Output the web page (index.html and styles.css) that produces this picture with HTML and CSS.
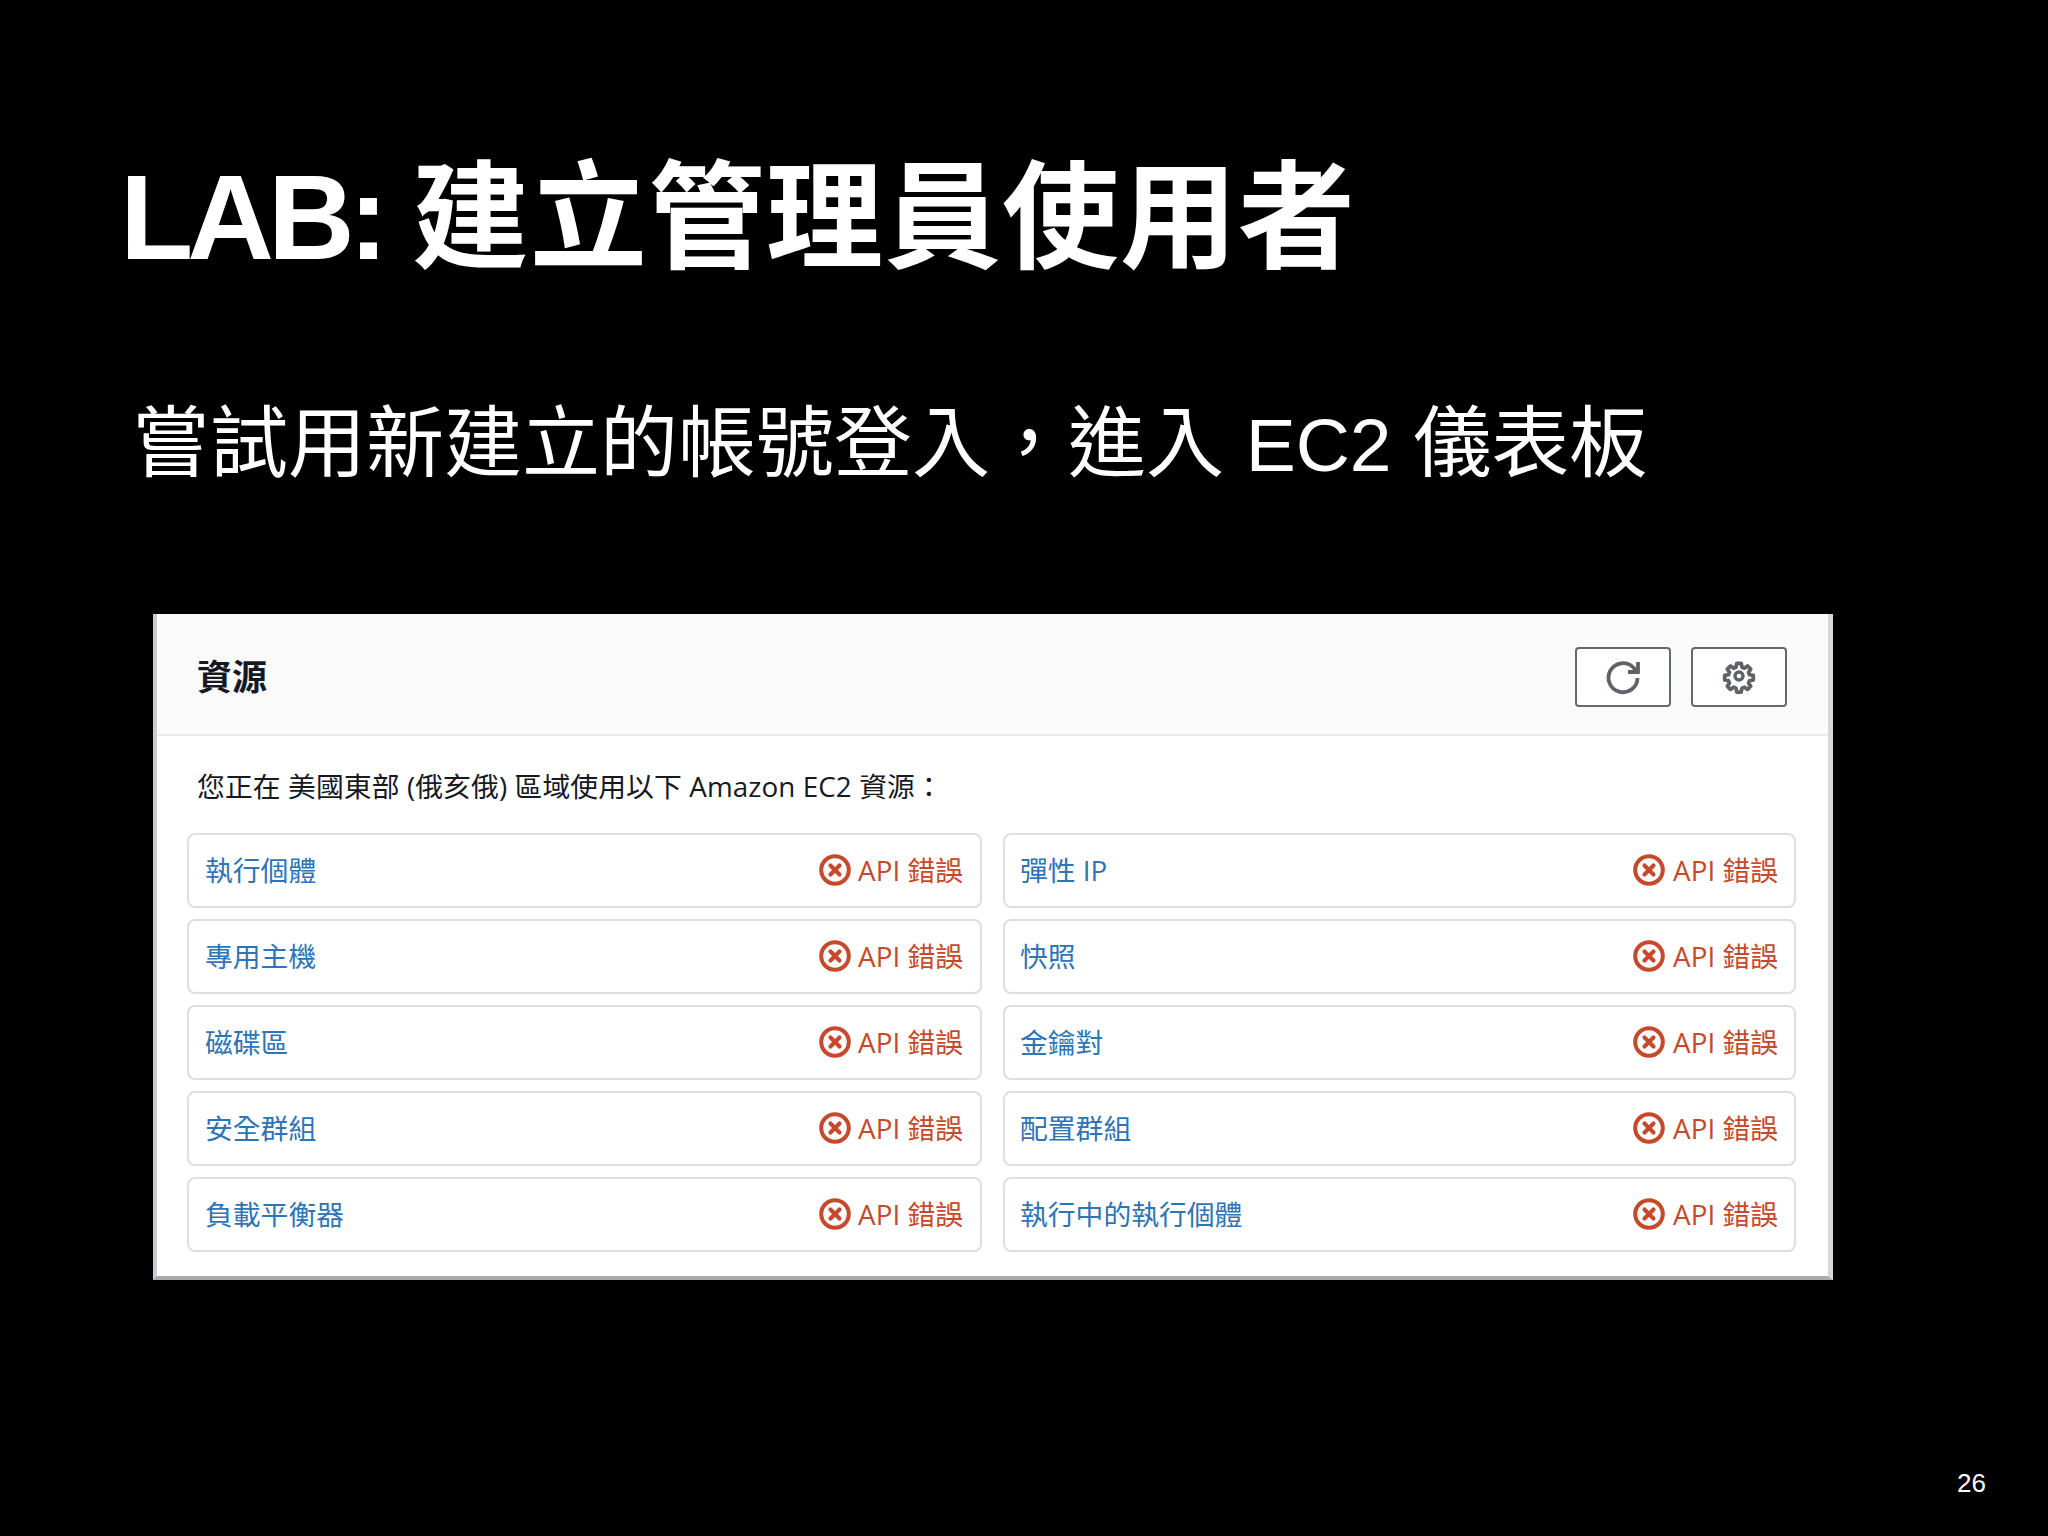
FILE: index.html
```html
<!DOCTYPE html>
<html lang="zh-Hant">
<head>
  <meta charset="UTF-8">
  <meta name="viewport" content="width=device-width, initial-scale=1.0">
  <title>LAB: 建立管理員使用者</title>
  <link rel="stylesheet" href="styles.css">
</head>
<body>
<svg class="defs" width="0" height="0">
  <symbol id="err" viewBox="0 0 32 32">
    <circle cx="16" cy="16" r="13.8" fill="none" stroke="currentColor" stroke-width="4"/>
    <path d="M11.500 11.500l9 9M20.500 11.500l-9 9" fill="none" stroke="currentColor" stroke-width="4.200" stroke-linecap="round"/>
  </symbol>
</svg>
<div class="slide">
  <h1 class="slide-title"><span class="lab">LAB:</span> 建立管理員使用者</h1>
  <p class="slide-sub">嘗試用新建立的帳號登入，進入 <span class="sub-latin">EC2</span> 儀表板</p>

  <div class="panel">
    <div class="panel-head">
      <h2>資源</h2>
      <div class="head-btns">
        <button class="icon-btn" type="button" aria-label="refresh">
          <svg width="36" height="36" viewBox="0 0 36 36"><path d="M32.500 19A14.500 14.500 0 1 1 28.300 8.500L33 13" fill="none" stroke="currentColor" stroke-width="3.800"/><path d="M33 3v10H23" fill="none" stroke="currentColor" stroke-width="3.800"/></svg>
        </button>
        <button class="icon-btn" type="button" aria-label="settings">
          <svg width="36" height="36" viewBox="0 1 36 36"><path d="M15.500 4h5l.8 4.200 2.700 1.100 3.500-2.400 3.500 3.500-2.400 3.500 1.100 2.700 4.200.8v5l-4.200.8-1.100 2.700 2.400 3.500-3.500 3.500-3.500-2.400-2.700 1.100-.8 4.200h-5l-.8-4.200-2.700-1.100-3.500 2.400-3.500-3.500 2.400-3.500-1.100-2.700-4.200-.8v-5l4.200-.8 1.100-2.700-2.400-3.500 3.500-3.500 3.500 2.400 2.700-1.100z" transform="translate(1.800 1.800) scale(.9)" fill="none" stroke="currentColor" stroke-width="4.200" stroke-linejoin="round"/><circle cx="18" cy="18" r="4" fill="none" stroke="currentColor" stroke-width="3.400"/></svg>
        </button>
      </div>
    </div>
    <div class="panel-body">
      <p class="intro">您正在 美國東部 (俄亥俄) 區域使用以下 Amazon EC2 資源：</p>
      <div class="res-grid">
        <div class="res-row"><a>執行個體</a><span class="api-err"><svg><use href="#err"/></svg>API 錯誤</span></div>
        <div class="res-row"><a>彈性 IP</a><span class="api-err"><svg><use href="#err"/></svg>API 錯誤</span></div>
        <div class="res-row"><a>專用主機</a><span class="api-err"><svg><use href="#err"/></svg>API 錯誤</span></div>
        <div class="res-row"><a>快照</a><span class="api-err"><svg><use href="#err"/></svg>API 錯誤</span></div>
        <div class="res-row"><a>磁碟區</a><span class="api-err"><svg><use href="#err"/></svg>API 錯誤</span></div>
        <div class="res-row"><a>金鑰對</a><span class="api-err"><svg><use href="#err"/></svg>API 錯誤</span></div>
        <div class="res-row"><a>安全群組</a><span class="api-err"><svg><use href="#err"/></svg>API 錯誤</span></div>
        <div class="res-row"><a>配置群組</a><span class="api-err"><svg><use href="#err"/></svg>API 錯誤</span></div>
        <div class="res-row"><a>負載平衡器</a><span class="api-err"><svg><use href="#err"/></svg>API 錯誤</span></div>
        <div class="res-row"><a>執行中的執行個體</a><span class="api-err"><svg><use href="#err"/></svg>API 錯誤</span></div>
      </div>
    </div>
  </div>

  <div class="page-num">26</div>
</div>
</body>
</html>
```

FILE: styles.css
```css
body {
  margin: 0;
  background: #000;
  font-family: "Liberation Sans", "Noto Sans CJK TC", sans-serif;
}

.defs {
  display: block;
  height: 0;
}

.slide {
  height: 1536px;
  box-sizing: border-box;
  padding: 147px 62px 0 120px;
  display: flex;
  flex-direction: column;
  color: #fff;
}

.slide-title {
  margin: 0;
  font-size: 117px;
  line-height: 140px;
  font-weight: 700;
  letter-spacing: 1px;
  white-space: nowrap;
}

.lab {
  font-size: 120px;
  letter-spacing: -6px;
  margin-right: -4px;
}

.slide-sub {
  margin: 0 0 0 12px;
  padding-top: 110px;
  font-size: 78px;
  line-height: 90px;
  white-space: nowrap;
}

.sub-latin {
  font-size: 75px;
}

.panel {
  margin: 124px 0 0 33px;
  width: 1680px;
  height: 666px;
  box-sizing: border-box;
  background: #fff;
  border-left: 4px solid #c9cbcc;
  border-right: 5px solid #d5d7d8;
  border-bottom: 4px solid #a9abac;
  color: #16191f;
  font-family: "Open Sans", "Noto Sans CJK TC", sans-serif;
}

.panel-head {
  height: 122px;
  box-sizing: border-box;
  background: #fafafa;
  border-bottom: 2px solid #eaeded;
  padding: 33px 41px 0 40px;
  display: flex;
  justify-content: space-between;
}

.panel-head h2 {
  margin: 1px 0 0;
  font-size: 35px;
  line-height: 58px;
  font-weight: 700;
}

.head-btns {
  display: flex;
  gap: 20px;
}

.icon-btn {
  width: 96px;
  height: 60px;
  padding: 0;
  background: #fff;
  border: 2px solid #65696e;
  border-radius: 4px;
  color: #5f6368;
  display: flex;
  align-items: center;
  justify-content: center;
}

.panel-body {
  padding: 30px 32px 0 30px;
}

.intro {
  margin: 0 0 0 10px;
  font-size: 27.800px;
  line-height: 40px;
  letter-spacing: .1px;
  white-space: nowrap;
}

.res-grid {
  margin-top: 27px;
  display: grid;
  grid-template-columns: 795px 793px;
  grid-auto-rows: 75px;
  gap: 11px 21px;
}

.res-row {
  box-sizing: border-box;
  border: 2px solid #dcdedf;
  border-radius: 8px;
  padding: 0 17px 3px 16px;
  display: flex;
  align-items: center;
  justify-content: space-between;
  font-size: 27.800px;
}

.res-row:nth-child(even) {
  padding-left: 15px;
  padding-right: 16px;
}

.res-row a {
  color: #2f74b5;
}

.api-err {
  display: flex;
  align-items: center;
  gap: 7px;
  color: #c5492a;
}

.res-row:nth-child(even) .api-err {
  gap: 8px;
}

.api-err svg {
  width: 32px;
  height: 32px;
  margin-top: 2px;
}

.page-num {
  margin-top: auto;
  margin-bottom: 38px;
  align-self: flex-end;
  font-size: 26px;
  line-height: 30px;
}
```
